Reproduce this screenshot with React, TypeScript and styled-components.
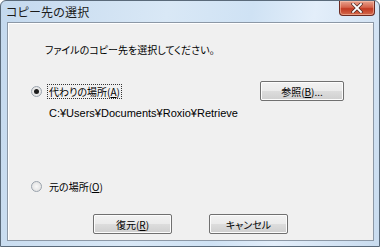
import React from "react";
import styled, { createGlobalStyle } from "styled-components";

const Global = createGlobalStyle`
  html, body { margin: 0; padding: 0; background: #fff; }
  body { font-family: "Noto Sans CJK JP", "Noto Sans", sans-serif; }
`;

const Window = styled.div`
  width: 380px;
  height: 247px;
  box-sizing: border-box;
  border: 1px solid #5a6a7a;
  border-radius: 6px 6px 0 0;
  background: linear-gradient(100deg, #c4d9ee 0%, #d9e8f6 40%, #cfe2f4 60%, #e3eefa 75%, #c9dcef 100%);
  display: flex;
  flex-direction: column;
  overflow: hidden;
`;

const TitleBar = styled.div`
  height: 21px;
  display: flex;
  align-items: flex-start;
  justify-content: space-between;
  padding-left: 5px;
  padding-right: 4px;
`;

const Title = styled.span`
  font-size: 12px;
  line-height: 22px;
  color: #1b1b1b;
  font-feature-settings: "palt";
  letter-spacing: 0.2px;
`;

const CloseButton = styled.div`
  width: 36px;
  height: 15px;
  box-sizing: border-box;
  border: 1px solid #6b2a22;
  border-top: none;
  border-radius: 0 0 4px 4px;
  background: linear-gradient(#e8a48f 0%, #d5634b 45%, #c23a22 55%, #d36a4c 100%);
  display: flex;
  align-items: center;
  justify-content: center;
  box-shadow: inset 0 0 0 1px rgba(255, 210, 190, 0.5);
`;

const Client = styled.div`
  flex: 1;
  margin: 0 5px 5px 6px;
  background: #f0f0f0;
  border: 1px solid #8c98a6;
  box-shadow: inset 1px 1px 0 #fff;
  display: flex;
  flex-direction: column;
  font-size: 10px;
  color: #000;
`;

const Message = styled.div`
  margin: 20px 0 0 37px;
  font-size: 10px;
  line-height: 14px;
  font-feature-settings: "palt";
`;

const OptionRow = styled.div<{ $top: number }>`
  display: flex;
  align-items: center;
  margin-top: ${(p) => p.$top}px;
  padding-left: 23px;
  padding-right: 29px;
  height: 20px;
`;

const RadioCircle = styled.span<{ $checked?: boolean }>`
  width: 11px;
  height: 11px;
  box-sizing: border-box;
  border-radius: 50%;
  border: 1px solid #9aa3ad;
  background: radial-gradient(circle, #f8f8f8 0%, #dcdcdc 100%);
  display: flex;
  align-items: center;
  justify-content: center;
  margin-right: 6px;
  &::after {
    content: "";
    width: 5px;
    height: 5px;
    border-radius: 50%;
    background: ${(p) => (p.$checked ? "#1d1d1d" : "transparent")};
  }
`;

const Label = styled.span<{ $focus?: boolean }>`
  font-size: 10px;
  line-height: 13px;
  padding: 0 1px;
  outline: ${(p) => (p.$focus ? "1px dotted #333" : "none")};
  font-feature-settings: "palt";
`;

const Underline = styled.span`
  text-decoration: underline;
`;

const Spacer = styled.div`
  flex: 1;
`;

const Button = styled.div<{ $w: number }>`
  width: ${(p) => p.$w}px;
  height: 20px;
  box-sizing: border-box;
  border: 1px solid #707070;
  border-radius: 2px;
  background: linear-gradient(#f2f2f2 0%, #ebebeb 49%, #dddddd 50%, #cfcfcf 100%);
  box-shadow: inset 0 0 0 1px #fcfcfc;
  display: flex;
  align-items: center;
  justify-content: center;
  font-size: 10px;
  font-feature-settings: "palt";
`;

const PathText = styled.div`
  margin: 6px 0 0 41px;
  font-family: "Liberation Sans", "Noto Sans", sans-serif;
  font-size: 11px;
  line-height: 12px;
`;

const ButtonRow = styled.div`
  display: flex;
  gap: 37px;
  padding-left: 85px;
  margin-bottom: 6px;
`;

export default function App() {
  return (
    <>
      <Global />
      <Window>
        <TitleBar>
          <Title>コピー先の選択</Title>
          <CloseButton>
            <svg width="12" height="10" viewBox="0 0 12 10">
              <path d="M2 1 L10 9 M10 1 L2 9" stroke="#4a2a24" strokeWidth="3.2" strokeLinecap="square" />
              <path d="M2 1 L10 9 M10 1 L2 9" stroke="#fff" strokeWidth="1.8" strokeLinecap="square" />
            </svg>
          </CloseButton>
        </TitleBar>
        <Client>
          <Message>ファイルのコピー先を選択してください。</Message>
          <OptionRow $top={24}>
            <RadioCircle $checked />
            <Label $focus>
              代わりの場所(<Underline>A</Underline>)
            </Label>
            <Spacer />
            <Button $w={84}>
              参照(<Underline>B</Underline>)...
            </Button>
          </OptionRow>
          <PathText>C:¥Users¥Documents¥Roxio¥Retrieve</PathText>
          <OptionRow $top={57}>
            <RadioCircle />
            <Label>
              元の場所(<Underline>O</Underline>)
            </Label>
          </OptionRow>
          <Spacer />
          <ButtonRow>
            <Button $w={79}>
              復元(<Underline>R</Underline>)
            </Button>
            <Button $w={79}>キャンセル</Button>
          </ButtonRow>
        </Client>
      </Window>
    </>
  );
}
